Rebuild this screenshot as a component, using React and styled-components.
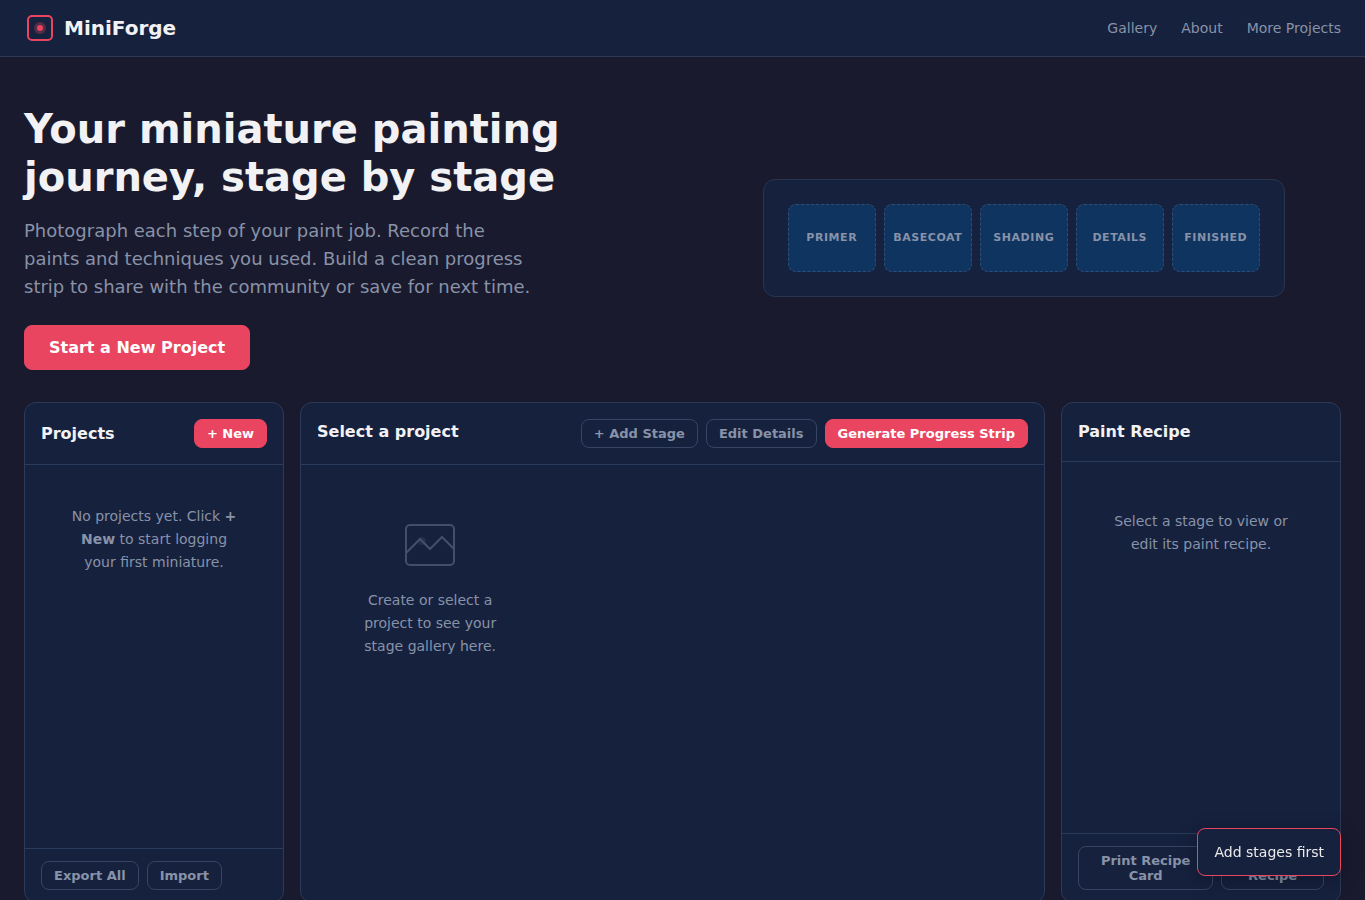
import { useState } from "react";
import styled, { createGlobalStyle, css } from "styled-components";

const STAGES = ["Primer", "Basecoat", "Shading", "Details", "Finished"];

function Logo() {
  return (
    <svg width="32" height="32" viewBox="0 0 32 32" fill="none" aria-hidden="true">
      <rect x="4" y="4" width="24" height="24" rx="4" stroke="#e94560" strokeWidth="2" />
      <circle cx="16" cy="16" r="6" fill="#e94560" opacity="0.3" />
      <circle cx="16" cy="16" r="3" fill="#e94560" />
    </svg>
  );
}

function PictureIcon() {
  return (
    <StPicture width="64" height="64" viewBox="0 0 64 64" fill="none" aria-hidden="true">
      <rect x="8" y="12" width="48" height="40" rx="4" stroke="currentColor" strokeWidth="2" />
      <path d="M8 40L22 26L32 36L44 24L56 36" stroke="currentColor" strokeWidth="2" />
      <circle cx="24" cy="28" r="4" fill="currentColor" opacity="0.3" />
    </StPicture>
  );
}

function Header() {
  return (
    <StHeader>
      <StBrand href="#">
        <Logo />
        MiniForge
      </StBrand>
      <StNav>
        <StNavLink href="#gallery">Gallery</StNavLink>
        <StNavLink href="#about">About</StNavLink>
        <StNavLink href="#more">More Projects</StNavLink>
      </StNav>
    </StHeader>
  );
}

function Hero() {
  return (
    <StHero>
      <div>
        <StTitle>Your miniature painting journey, stage by stage</StTitle>
        <StLead>
          Photograph each step of your paint job. Record the paints and
          techniques you used. Build a clean progress strip to share with the
          community or save for next time.
        </StLead>
        <StButton $primary $large>
          Start a New Project
        </StButton>
      </div>
      <StStrip>
        {STAGES.map((stage) => (
          <StSlot key={stage}>{stage}</StSlot>
        ))}
      </StStrip>
    </StHero>
  );
}

function App() {
  const [toast, setToast] = useState("Add stages first");

  const onNeedStages = () => {
    setToast("Add stages first");
  };

  return (
    <>
      <GlobalStyle />
      <Header />
      <Hero />
      <StWorkspace id="gallery">
        <StPanel>
          <StPanelHead $align="center">
            <StH2>Projects</StH2>
            <StButton $primary>+ New</StButton>
          </StPanelHead>
          <StPanelBody $padding="8px">
            <StEmpty>
              No projects yet. Click <strong>+ New</strong> to start logging
              your first miniature.
            </StEmpty>
          </StPanelBody>
          <StPanelFoot>
            <StButton>Export All</StButton>
            <StButton>Import</StButton>
          </StPanelFoot>
        </StPanel>

        <StPanel>
          <StPanelHead $align="flex-start">
            <StH2>Select a project</StH2>
            <StActions>
              <StButton>+ Add Stage</StButton>
              <StButton>Edit Details</StButton>
              <StButton $primary onClick={onNeedStages}>
                Generate Progress Strip
              </StButton>
            </StActions>
          </StPanelHead>
          <StGallery $padding="16px">
            <StEmpty>
              <PictureIcon />
              Create or select a project to see your stage gallery here.
            </StEmpty>
          </StGallery>
        </StPanel>

        <StPanel>
          <StPanelHead $align="center">
            <StH2>Paint Recipe</StH2>
          </StPanelHead>
          <StPanelBody $padding="16px">
            <StEmpty>Select a stage to view or edit its paint recipe.</StEmpty>
          </StPanelBody>
          <StPanelFoot>
            <StButton onClick={onNeedStages}>Print Recipe Card</StButton>
            <StButton onClick={onNeedStages}>Copy Recipe</StButton>
          </StPanelFoot>
        </StPanel>
      </StWorkspace>
      {toast && <StToast role="status">{toast}</StToast>}
    </>
  );
}

const GlobalStyle = createGlobalStyle`
  * {
    box-sizing: border-box;
    margin: 0;
    padding: 0;
  }

  body {
    background: #1a1a2e;
    color: #eaeaea;
    font-family: "DejaVu Sans", sans-serif;
    font-size: 16px;
    line-height: 26px;
  }
`;

const StHeader = styled.header`
  display: flex;
  align-items: center;
  justify-content: space-between;
  padding: 12px 24px;
  background: #16213e;
  border-bottom: 1px solid #2d3a56;
`;

const StBrand = styled.a`
  display: flex;
  align-items: center;
  gap: 8px;
  color: #f2f2f4;
  font-size: 20px;
  font-weight: 700;
  line-height: 32px;
  text-decoration: none;
`;

const StNav = styled.nav`
  display: flex;
  gap: 24px;
`;

const StNavLink = styled.a`
  color: #8892a8;
  font-size: 14px;
  line-height: 23px;
  text-decoration: none;
`;

const StHero = styled.section`
  display: grid;
  grid-template-columns: 1fr 1fr;
  align-items: center;
  gap: 48px;
  padding: 48px 24px 32px;
`;

const StTitle = styled.h1`
  margin-bottom: 16px;
  color: #f2f2f4;
  font-size: 40px;
  font-weight: 700;
  line-height: 48px;
`;

const StLead = styled.p`
  max-width: 512px;
  margin-bottom: 24px;
  color: #8892a8;
  font-size: 18px;
  line-height: 28px;
`;

const StStrip = styled.div`
  display: grid;
  grid-template-columns: repeat(5, minmax(88px, 1fr));
  justify-self: center;
  gap: 8px;
  padding: 24px;
  background: #16213e;
  border: 1px solid #2a3550;
  border-radius: 12px;
`;

const StSlot = styled.div`
  padding: 24px 8px;
  background: #0f3460;
  border: 1px dashed #2f4d76;
  border-radius: 8px;
  color: #8892a8;
  font-size: 11px;
  font-weight: 600;
  letter-spacing: 0.05em;
  line-height: 18px;
  text-align: center;
  text-transform: uppercase;
`;

const StWorkspace = styled.main`
  display: grid;
  grid-template-columns: 260px 1fr 280px;
  gap: 16px;
  padding: 0 24px;
`;

const StPanel = styled.section`
  display: flex;
  flex-direction: column;
  min-height: 501px;
  background: #16213e;
  border: 1px solid #2a3a5a;
  border-radius: 12px;
`;

const StPanelHead = styled.div`
  display: flex;
  align-items: ${({ $align }) => $align};
  justify-content: space-between;
  padding: 16px;
  border-bottom: 1px solid #2a3a5a;
`;

const StPanelBody = styled.div`
  flex: 1;
  padding: ${({ $padding }) => $padding};
`;

const StGallery = styled(StPanelBody)`
  display: grid;
  grid-template-columns: repeat(auto-fill, minmax(200px, 1fr));
  align-content: start;
  gap: 16px;
`;

const StPanelFoot = styled.div`
  display: flex;
  gap: 8px;
  padding: 12px 16px;
  border-top: 1px solid #2a3a5a;
`;

const StActions = styled.div`
  display: flex;
  gap: 8px;
`;

const StH2 = styled.h2`
  color: #f2f2f4;
  font-size: 16px;
  font-weight: 600;
`;

const StEmpty = styled.div`
  padding: 32px;
  color: #8892a8;
  font-size: 14px;
  line-height: 23px;
  text-align: center;
`;

const StPicture = styled.svg`
  display: block;
  margin: 0 auto 12px;
  opacity: 0.4;
`;

const StButton = styled.button`
  padding: 6px 12px;
  background: transparent;
  border: 1px solid #374463;
  border-radius: 8px;
  color: #8892a8;
  font-family: inherit;
  font-size: 13px;
  font-weight: 600;
  line-height: 15px;
  cursor: pointer;

  ${({ $primary }) =>
    $primary &&
    css`
      background: #e94560;
      border-color: #e94560;
      color: #fff;
    `}

  ${({ $large }) =>
    $large &&
    css`
      padding: 12px 24px;
      font-size: 16px;
      line-height: 19px;
    `}
`;

const StToast = styled.div`
  position: fixed;
  right: 24px;
  bottom: 24px;
  padding: 12px 16px;
  background: #16213e;
  border: 1px solid #e94560;
  border-radius: 8px;
  box-shadow: 0 4px 20px rgba(0, 0, 0, 0.3);
  font-size: 14px;
  line-height: 22px;
`;

export default App;
